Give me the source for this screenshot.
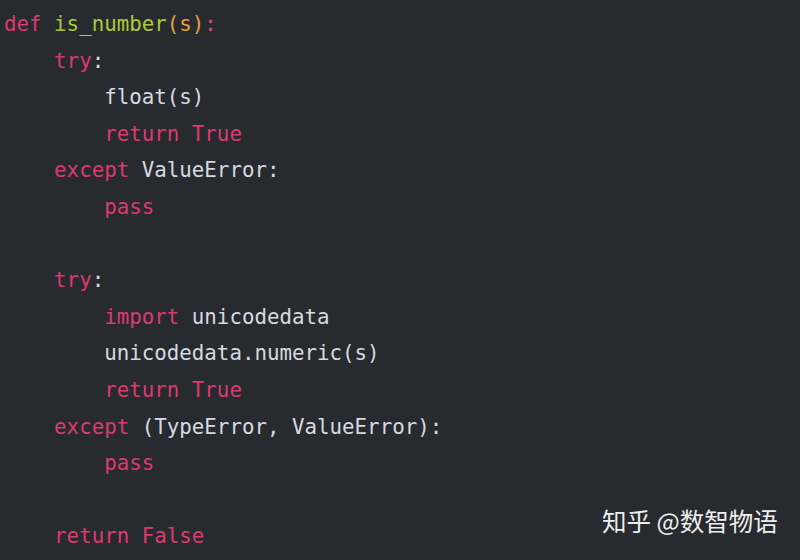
import React from "react";

const K = "text-[#dc3a6e]";
const F = "text-[#a9cb3c]";
const O = "text-[#e3a03e]";
const T = "text-[#d6dae0]";

const lines = [
  [["def", K], [" "], ["is_number", F], ["(s)", O], [":", "text-[#c95a85]"]],
  [["    "], ["try", K], [":", T]],
  [["        "], ["float(s)", T]],
  [["        "], ["return True", K]],
  [["    "], ["except", K], [" ValueError:", T]],
  [["        "], ["pass", K]],
  [],
  [["    "], ["try", K], [":", T]],
  [["        "], ["import", K], [" unicodedata", T]],
  [["        "], ["unicodedata.numeric(s)", T]],
  [["        "], ["return True", K]],
  [["    "], ["except", K], [" (TypeError, ValueError):", T]],
  [["        "], ["pass", K]],
  [],
  [["    "], ["return False", K]],
];

export default function App() {
  return (
    <div className="relative w-[800px] h-[560px] bg-[#272a2e] overflow-hidden">
      <pre
        className="pl-[4px] pt-[6px] text-[20.8px] leading-[36.6px] whitespace-pre"
        style={{ fontFamily: '"DejaVu Sans Mono", "Liberation Mono", monospace' }}
      >
        {lines.map((line, i) => (
          <div key={i} className="h-[36.6px]">
            {line.map(([txt, cls], j) => (
              <span key={j} className={cls}>
                {txt}
              </span>
            ))}
          </div>
        ))}
      </pre>

      {/* watermark */}
      <div
        className="absolute left-[602px] top-[504px] text-[24.5px] leading-[34px] text-[#eeeeee]"
        style={{ fontFamily: '"Noto Sans CJK SC", "Noto Sans", sans-serif' }}
      >
        知乎 @数智物语
      </div>
    </div>
  );
}
